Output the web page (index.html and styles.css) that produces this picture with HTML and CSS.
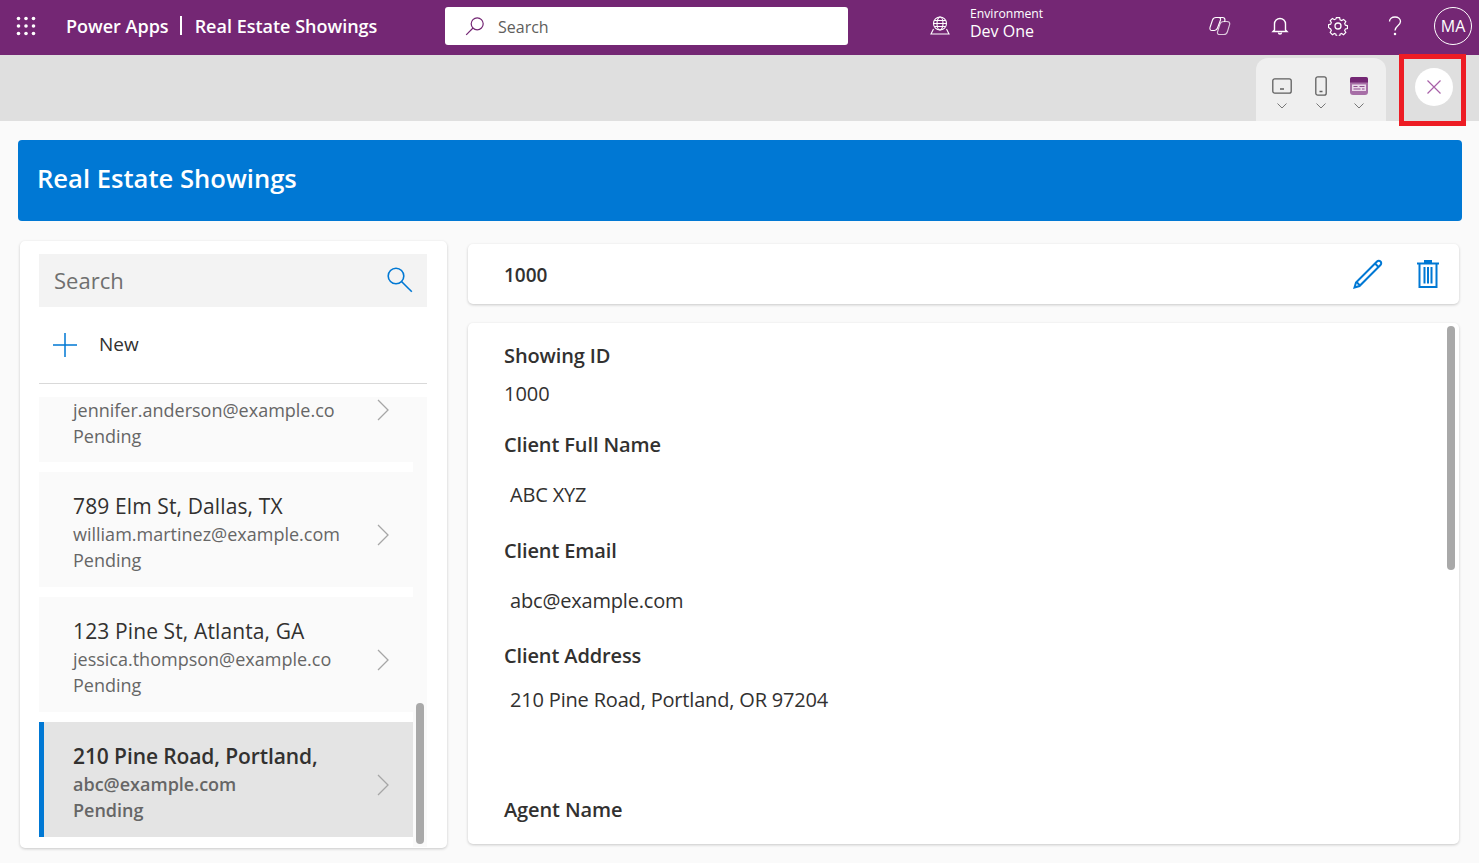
FILE: index.html

```html
<!DOCTYPE html>
<html lang="en">
<head>
    <meta charset="UTF-8">
    <meta name="viewport" content="width=device-width, initial-scale=1.0">
    <title>Real Estate Showings</title>
    <link rel="stylesheet" href="styles.css">
</head>
<body>

<header class="topbar">
    <div class="brand">
        <svg class="waffle" width="20" height="20" viewBox="0 0 20 20" fill="#fff">
            <circle cx="2.5" cy="2.5" r="1.8"/><circle cx="10" cy="2.5" r="1.8"/><circle cx="17.5" cy="2.5" r="1.8"/>
            <circle cx="2.5" cy="10" r="1.8"/><circle cx="10" cy="10" r="1.8"/><circle cx="17.5" cy="10" r="1.8"/>
            <circle cx="2.5" cy="17.5" r="1.8"/><circle cx="10" cy="17.5" r="1.8"/><circle cx="17.5" cy="17.5" r="1.8"/>
        </svg>
        <span class="brand-name">Power Apps</span>
        <span class="brand-sep"></span>
        <span class="brand-name">Real Estate Showings</span>
    </div>
    <div class="top-search">
        <svg width="20" height="20" viewBox="0 0 20 20" fill="none" stroke="#742774" stroke-width="1.2">
            <circle cx="12.2" cy="7.8" r="6"/><path d="M8 12 1.2 18.8"/>
        </svg>
        <span>Search</span>
    </div>
    <div class="env">
        <svg width="20" height="20" viewBox="0 0 20 20" fill="none" stroke="#fff" stroke-width="1.1">
            <circle cx="10" cy="7.5" r="6.5"/><ellipse cx="10" cy="7.5" rx="3" ry="6.5"/><path d="M3.5 7.5h13M4.5 4.5h11M4.5 10.5h11M3.5 13 1 18h18L16.500 13"/>
        </svg>
        <div class="env-text">
            <div class="env-label">Environment</div>
            <div class="env-name">Dev One</div>
        </div>
    </div>
    <div class="top-icons">
        <svg width="22" height="20" viewBox="0 0 22 20" fill="none" stroke="#fff" stroke-width="1.1">
            <path d="M7 1.500c-2 0-3 1-3.500 2.500L1 11.500c-.5 2 .5 3 2 3h2.500c1.500 0 2.500-1 3-2.500L11.500 4C12 2.500 11 1.500 9.500 1.500z"/>
            <path d="M9.500 1.500h4c1.500 0 2.500 1 2.500 2.500l-.5 2"/>
            <path d="M15 5.500h3c1.500 0 2.800 1 2.800 2.500l-2.300 7.500c-.5 1.800-1.500 3-3.500 3h-4.500c-1.500 0-2.500-1-2-2.500L11 8c.5-1.500 2-2.500 4-2.500z" stroke-opacity=".75"/>
        </svg>
        <svg width="20" height="20" viewBox="0 0 20 20" fill="none" stroke="#fff" stroke-width="1.4">
            <path d="M4.500 14V8a5.500 5.500 0 0 1 11 0v6l1.500 1.500H3z"/><path d="M8.500 16.500a1.500 1.500 0 0 0 3 0"/>
        </svg>
        <svg width="20" height="20" viewBox="0 0 20 20" fill="none" stroke="#fff" stroke-width="1.3">
            <circle cx="10" cy="10" r="3"/>
            <path d="M8.200 1h3.600l.5 2.500 1.700.8 2.200-1.300 2.500 2.500-1.300 2.200.8 1.700 2.300.5v3.200l-2.300.5-.8 1.700 1.300 2.200-2.500 2.500-2.200-1.300-1.700.8-.5 2.400H8.200l-.5-2.400-1.700-.8-2.200 1.300-2.500-2.500 1.300-2.200-.8-1.700L-.500 12V8.800l2.300-.5.800-1.700-1.300-2.200L3.800 2l2.200 1.300 1.700-.8z" transform="translate(1 .7) scale(.9)"/>
        </svg>
        <svg width="14" height="20" viewBox="0 0 14 20" fill="none" stroke="#fff" stroke-width="1.300">
            <path d="M1.500 5.500C1.500 3 3.800 1 7 1s5.500 2 5.500 4.500c0 4-5.500 4.500-5.500 9"/><circle cx="7" cy="18" r=".6" fill="#fff"/>
        </svg>
        <div class="avatar">MA</div>
    </div>
</header>

<div class="subbar">
    <div class="device-panel">
        <div class="device">
            <svg width="20" height="16" viewBox="0 0 20 16" fill="none" stroke="#5f5f5f" stroke-width="1.300">
                <rect x=".8" y=".8" width="18.400" height="14.400" rx="2"/><path d="M8 11h4" stroke-width="1.500"/>
            </svg>
            <svg class="caret" width="10" height="6" viewBox="0 0 10 6" fill="none" stroke="#777" stroke-width="1"><path d="M.5.500 5 5 9.500.5"/></svg>
        </div>
        <div class="device">
            <svg width="14" height="20" viewBox="0 0 14 20" fill="none" stroke="#5f5f5f" stroke-width="1.300">
                <rect x="1.800" y=".8" width="10.400" height="18.400" rx="2"/><path d="M5.500 15.500h3" stroke-width="1.500"/>
            </svg>
            <svg class="caret" width="10" height="6" viewBox="0 0 10 6" fill="none" stroke="#777" stroke-width="1"><path d="M.5.500 5 5 9.500.5"/></svg>
        </div>
        <div class="device">
            <svg width="18" height="18" viewBox="0 0 18 18">
                <rect width="18" height="18" rx="3" fill="#a66ea6"/>
                <path d="M2 0h14a2 2 0 0 1 2 2v3.500H0V2a2 2 0 0 1 2-2z" fill="#742774"/>
                <rect x="2" y="7.500" width="14" height="6.500" fill="#ead9ea"/>
                <path d="M3.500 9.500h4M9.500 9.500h5M3.500 12h7M12 12h2.500" stroke="#8e4d8e" stroke-width="1"/>
            </svg>
            <svg class="caret" width="10" height="6" viewBox="0 0 10 6" fill="none" stroke="#777" stroke-width="1"><path d="M.5.500 5 5 9.500.5"/></svg>
        </div>
    </div>
</div>

<div class="close-box">
    <div class="close-btn">
        <svg width="14" height="14" viewBox="0 0 14 14" fill="none" stroke="#a860a8" stroke-width="1.200"><path d="M.5.500l13 13M13.500.5l-13 13"/></svg>
    </div>
</div>

<main class="app">
    <div class="app-header">Real Estate Showings</div>

    <div class="columns">
        <section class="left-card">
            <div class="list-search">
                <span>Search</span>
                <svg width="27" height="27" viewBox="0 0 27 27" fill="none" stroke="#0078d4" stroke-width="1.600">
                    <circle cx="10" cy="10" r="7.800"/><path d="M15.500 15.500 25.800 25.800"/>
                </svg>
            </div>
            <div class="new-row">
                <svg width="24" height="24" viewBox="0 0 24 24" fill="none" stroke="#0078d4" stroke-width="1.500"><path d="M12 0v24M0 12h24"/></svg>
                <span>New</span>
            </div>
            <div class="list">
                <div class="list-inner">
                    <div class="list-item first">
                        <div class="item-text">
                            <div class="item-sub">jennifer.anderson@example.co</div>
                            <div class="item-sub">Pending</div>
                        </div>
                        <svg class="chev" width="12" height="22" viewBox="0 0 12 22" fill="none" stroke="#a6a6a6" stroke-width="1.300"><path d="M1 1 11 11 1 21"/></svg>
                    </div>
                    <div class="list-item">
                        <div class="item-text">
                            <div class="item-title">789 Elm St, Dallas, TX</div>
                            <div class="item-sub">william.martinez@example.com</div>
                            <div class="item-sub">Pending</div>
                        </div>
                        <svg class="chev" width="12" height="22" viewBox="0 0 12 22" fill="none" stroke="#a6a6a6" stroke-width="1.300"><path d="M1 1 11 11 1 21"/></svg>
                    </div>
                    <div class="list-item">
                        <div class="item-text">
                            <div class="item-title">123 Pine St, Atlanta, GA</div>
                            <div class="item-sub">jessica.thompson@example.co</div>
                            <div class="item-sub">Pending</div>
                        </div>
                        <svg class="chev" width="12" height="22" viewBox="0 0 12 22" fill="none" stroke="#a6a6a6" stroke-width="1.300"><path d="M1 1 11 11 1 21"/></svg>
                    </div>
                    <div class="list-item selected">
                        <div class="item-text">
                            <div class="item-title">210 Pine Road, Portland,</div>
                            <div class="item-sub">abc@example.com</div>
                            <div class="item-sub">Pending</div>
                        </div>
                        <svg class="chev" width="12" height="22" viewBox="0 0 12 22" fill="none" stroke="#a6a6a6" stroke-width="1.300"><path d="M1 1 11 11 1 21"/></svg>
                    </div>
                </div>
                <div class="list-thumb"></div>
            </div>
        </section>

        <section class="right-col">
            <div class="title-card">
                <span>1000</span>
                <div class="title-actions">
                    <svg width="30" height="30" viewBox="0 0 30 30" fill="none" stroke="#0078d4" stroke-width="2">
                        <path d="M1.500 28.500 3 23.500 24 2.500a2.200 2.200 0 0 1 3.500 3.500L6.500 27z"/><path d="M3.500 23 7 26.500M22 4.500 25.500 8"/>
                    </svg>
                    <svg width="22" height="28" viewBox="0 0 22 28" fill="none" stroke="#0078d4" stroke-width="2">
                        <path d="M0 3.500h22" /><path d="M8 3V.5h6V3" fill="#0078d4"/><path d="M2.500 3.500V27h17V3.500M7.500 7v16.500M11 7v16.500M14.500 7v16.500"/>
                    </svg>
                </div>
            </div>
            <div class="detail-card">
                <div class="field-label first-label">Showing ID</div>
                <div class="field-id">1000</div>
                <div class="field-label client-name">Client Full Name</div>
                <div class="field-value">ABC XYZ</div>
                <div class="field-label client-email">Client Email</div>
                <div class="field-value">abc@example.com</div>
                <div class="field-label client-address">Client Address</div>
                <div class="field-value">210 Pine Road, Portland, OR 97204</div>
                <div class="field-label agent-name">Agent Name</div>
                <div class="detail-thumb"></div>
            </div>
        </section>
    </div>
</main>

</body>
</html>
```

FILE: styles.css

```css
* { box-sizing: border-box; }
html, body { height: 100%; }
body { margin: 0; height: 863px; overflow: hidden; font-family: "Open Sans", "Noto Sans", sans-serif; background-color: #fafafa; color: #323130; position: relative; }

.topbar { height: 55px; padding-bottom: 4px; background-color: #742774; color: #fff; display: flex; align-items: center; }
.brand { width: 445px; display: flex; align-items: center; padding-left: 16px; flex-shrink: 0; }
.waffle { margin-right: 30px; }
.brand-name { font-size: 18px; font-weight: 600; }
.brand-sep { width: 2px; height: 19px; background-color: #fff; margin: 0 13px 0 11px; }
.top-search { width: 403px; height: 38px; background-color: #fff; border-radius: 3px; display: flex; align-items: center; padding-left: 20px; gap: 13px; color: #605e5c; font-size: 16px; flex-shrink: 0; }
.top-search span { margin-top: 2px; }
.env { display: flex; align-items: center; margin-left: 82px; gap: 20px; width: 262px; flex-shrink: 0; }
.env-text { margin-top: -3px; }
.env-label { font-size: 12.200px; line-height: 14px; }
.env-name { font-size: 16px; line-height: 21px; }
.top-icons { display: flex; align-items: center; margin-left: 17px; }
.top-icons svg:nth-child(1) { margin-right: 39px; }
.top-icons svg:nth-child(2) { margin-right: 38px; }
.top-icons svg:nth-child(3) { margin-right: 40px; }
.top-icons svg:nth-child(4) { margin-right: 32px; }
.avatar { width: 38px; height: 38px; border: 1px solid #fff; border-radius: 50%; display: flex; align-items: center; justify-content: center; font-size: 16px; flex-shrink: 0; }

.subbar { height: 66px; background-color: #dfdfdf; display: flex; justify-content: flex-end; align-items: flex-end; padding-right: 93px; }
.device-panel { width: 130px; height: 63px; background-color: #efefef; border-radius: 12px 12px 0 0; display: flex; padding: 18px 17px 0 16px; justify-content: space-between; }
.device { width: 20px; display: grid; grid-template-rows: 20px 6px; row-gap: 7px; justify-items: center; align-items: center; align-content: start; }

.close-box { position: absolute; left: 1399px; top: 54px; width: 67px; height: 72px; border: 5px solid #ed1c24; display: flex; align-items: center; justify-content: center; }
.close-btn { width: 38px; height: 38px; margin: -6px 0 0 2px; background-color: #fff; border-radius: 50%; display: flex; align-items: center; justify-content: center; }

.app { padding: 19px 17px 0 18px; }
.app-header { height: 81px; padding: 0 0 4px 19px; background-color: #0078d4; color: #fff; border-radius: 4px; display: flex; align-items: center; font-size: 25.600px; font-weight: 600; }
.columns { display: flex; padding: 20px 3px 0 2px; gap: 21px; }

.left-card { width: 427px; height: 607px; background-color: #fff; border-radius: 5px; box-shadow: 0 1px 3px rgba(0, 0, 0, 0.2); padding: 13px 20px 0 19px; }
.list-search { height: 53px; background-color: #f3f3f3; display: flex; align-items: center; justify-content: space-between; padding: 0 14px 2px 15px; color: #6f6f6f; font-size: 22px; }
.new-row { height: 77px; border-bottom: 1px solid #d9d9d9; display: flex; align-items: center; padding: 0 0 0 14px; gap: 22px; font-size: 19px; color: #323130; }
.new-row span { margin-top: -2px; }
.list { position: relative; height: 450px; margin-top: 13px; overflow: hidden; background-color: #fafafa; }
.list-inner { width: 374px; height: 100%; background-color: #fff; display: flex; flex-direction: column; gap: 10px; }
.list-item { height: 115px; flex-shrink: 0; margin-right: -14px; background-color: #fafafa; display: flex; align-items: center; justify-content: space-between; padding: 5px 38px 0 34px; }
.list-item.first { height: 65px; padding-top: 0; align-items: flex-start; }
.list-item.first .chev { margin-top: 2px; }
.list-item.selected { margin-right: 0; background-color: #e4e4e4; border-left: 5px solid #0078d4; padding: 5px 24px 0 29px; font-weight: 600; }
.item-title { font-size: 21px; line-height: 29px; letter-spacing: 0.12px; color: #323130; }
.selected .item-title { letter-spacing: -0.1px; }
.item-sub { font-size: 18px; line-height: 26px; color: #666; }
.chev { margin-top: 5px; flex-shrink: 0; }
.list-thumb { position: absolute; left: 377px; top: 306px; width: 8px; height: 141px; background-color: #a9a9a9; border-radius: 4px; }

.right-col { width: 991px; display: flex; flex-direction: column; gap: 19px; padding-top: 3px; }
.title-card { height: 60px; background-color: #fff; border-radius: 5px; box-shadow: 0 1px 3px rgba(0, 0, 0, 0.2); display: flex; align-items: center; justify-content: space-between; padding: 0 20px 0 36px; font-size: 19px; font-weight: 600; }
.title-card span { margin-top: 2px; }
.title-actions { display: flex; align-items: center; gap: 34px; }
.detail-card { position: relative; height: 521px; background-color: #fff; border-radius: 5px; box-shadow: 0 1px 3px rgba(0, 0, 0, 0.2); padding: 18px 36px 0; }
.field-label { font-size: 20px; line-height: 30px; font-weight: 600; letter-spacing: -0.12px; }
.field-id { font-size: 20px; line-height: 30px; margin-top: 8px; }
.field-value { font-size: 20px; line-height: 30px; padding-left: 6px; letter-spacing: -0.18px; }
.client-name { margin-top: 21px; }
.client-name + .field-value { margin-top: 20px; }
.client-email { margin-top: 26px; }
.client-email + .field-value { margin-top: 20px; }
.client-address { margin-top: 25px; }
.client-address + .field-value { margin-top: 14px; }
.agent-name { margin-top: 80px; }
.detail-thumb { position: absolute; right: 4px; top: 3px; width: 8px; height: 244px; background-color: #a9a9a9; border-radius: 4px; }
```
